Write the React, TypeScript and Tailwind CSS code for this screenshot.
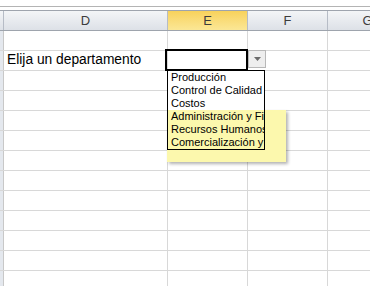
import React from "react";

const cols = [
  { name: "", w: "w-[4px]" },
  { name: "D", w: "w-[164px]" },
  { name: "E", w: "w-[80px]" },
  { name: "F", w: "w-[80px]" },
  { name: "G", w: "w-[80px]" },
];

const options = [
  "Producción",
  "Control de Calidad",
  "Costos",
  "Administración y Finanzas",
  "Recursos Humanos",
  "Comercialización y Ventas",
];

function Row({ label }: { label?: string }) {
  return (
    <div className="flex h-[20px] border-b border-[#d8d8d8]">
      <div className="w-[4px] shrink-0 border-r border-[#c8c8c8] bg-[#e4e8ee]" />
      <div className="w-[164px] shrink-0 border-r border-[#d8d8d8] flex items-center pl-[3px] text-[13.8px] text-black">
        {label}
      </div>
      <div className="w-[80px] shrink-0 border-r border-[#d8d8d8]" />
      <div className="w-[80px] shrink-0 border-r border-[#d8d8d8]" />
      <div className="w-[80px] shrink-0" />
    </div>
  );
}

export default function App() {
  return (
    <div
      className="relative w-[370px] h-[286px] overflow-hidden bg-white"
      style={{ fontFamily: '"Liberation Sans", Arial, sans-serif' }}
    >
      <div className="h-[6px]" />
      <div className="h-px bg-[#b4b4b4]" />
      <div className="h-[3px]" />
      <div className="flex h-[21px] border-y border-[#9ea4ad] bg-gradient-to-b from-[#f3f5f7] to-[#dde1e7]">
        {cols.map((c) => (
          <div
            key={c.name || "corner"}
            className={`${c.w} shrink-0 border-r border-[#b6bcc6] flex items-center justify-center text-[13px] text-[#3c3c3c] ${
              c.name === "E" ? "bg-gradient-to-b from-[#f8d25a] to-[#fbe795]" : ""
            }`}
          >
            {c.name}
          </div>
        ))}
      </div>
      {Array.from({ length: 13 }).map((_, i) => (
        <Row key={i} label={i === 1 ? "Elija un departamento" : undefined} />
      ))}

      {/* input message tooltip */}
      <div className="absolute left-[167px] top-[110px] w-[119px] h-[52px] bg-[#fcf8ad] shadow-[2px_2px_3px_rgba(0,0,0,0.3)]" />

      {/* active cell */}
      <div className="absolute left-[165px] top-[49px] w-[83px] h-[22px] border-2 border-black" />

      {/* dropdown button */}
      <div className="absolute left-[248px] top-[50px] w-[18px] h-[18px] border border-[#b8b8b8] bg-[#eeeeee] flex items-center justify-center">
        <svg width="7" height="4" viewBox="0 0 7 4">
          <path d="M0 0 H7 L3.5 4 Z" fill="#6a6a6a" />
        </svg>
      </div>

      {/* list */}
      <div className="absolute left-[167px] top-[70px] w-[98px] h-[80px] border border-black overflow-hidden">
        {options.map((o, i) => (
          <div
            key={o}
            className={`h-[13px] leading-[13px] pl-[3px] text-[11px] text-black whitespace-nowrap ${
              i < 3 ? "bg-white" : ""
            }`}
          >
            {o}
          </div>
        ))}
      </div>
    </div>
  );
}
